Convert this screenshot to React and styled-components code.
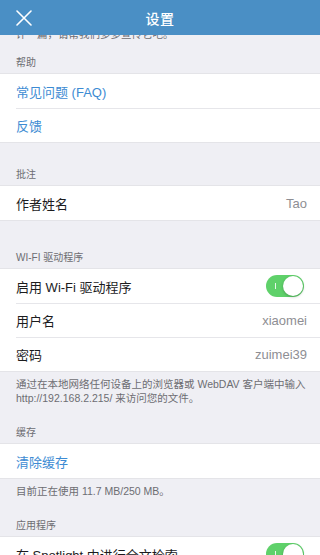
import React from "react";
import styled, { createGlobalStyle } from "styled-components";

const GlobalStyle = createGlobalStyle`
  html, body {
    margin: 0;
    padding: 0;
    background: #efeff4;
  }
  body {
    font-family: "Liberation Sans", "Noto Sans CJK SC", sans-serif;
    -webkit-font-smoothing: antialiased;
  }
`;

const Screen = styled.div`
  width: 320px;
  height: 555px;
  display: flex;
  flex-direction: column;
  overflow: hidden;
  background: #efeff4;
`;

const NavBar = styled.header`
  flex: 0 0 35px;
  display: flex;
  align-items: center;
  justify-content: center;
  position: relative;
  z-index: 2;
  background: #4a8fc5;
  color: #fff;
  font-size: 14px;
  font-weight: 500;
  letter-spacing: 0.5px;

  .close-btn {
    position: absolute;
    left: 16px;
    top: 10px;
    width: 16px;
    height: 16px;
    padding: 0;
    border: 0;
    background: none;
    display: flex;
  }
`;

const Content = styled.main`
  flex: 1;
  overflow: hidden;
`;

const SectionHeader = styled.div`
  padding: ${(p) => p.$top}px 16px 5px;
  font-size: 10px;
  line-height: 13px;
  color: #6d6d72;
`;

const SectionFooter = styled.div`
  padding: 5px 16px 0;
  margin-top: ${(p) => p.$offset || 0}px;
  font-size: 10.5px;
  line-height: 14px;
  color: #6d6d72;
  white-space: nowrap;
`;

const Group = styled.div`
  background: #fff;
  border-top: 1px solid #e4e4e8;
  border-bottom: 1px solid #e4e4e8;
  margin-top: -1px;
`;

const Row = styled.div`
  height: 34px;
  display: flex;
  align-items: center;
  justify-content: space-between;
  padding-right: 12px;
  margin-left: 16px;
  box-sizing: border-box;
  font-size: 13px;
  color: ${(p) => (p.$link ? "#3d8bd3" : "#1c1c1e")};

  & + & {
    border-top: 1px solid #e6e6ea;
  }
`;

const Value = styled.span`
  color: #8e8e93;
  padding-right: 1px;
`;

const SwitchTrack = styled.span`
  position: relative;
  width: 38px;
  height: 22px;
  margin-right: 4px;
  border-radius: 11px;
  background: #5fd16a;
  flex: 0 0 auto;

  .mark {
    position: absolute;
    left: 9px;
    top: 8px;
    width: 1px;
    height: 6px;
    background: rgba(255, 255, 255, 0.85);
  }
  .knob {
    position: absolute;
    right: 1px;
    top: 1px;
    width: 20px;
    height: 20px;
    border-radius: 50%;
    background: #fff;
    box-shadow: 0 1px 3px rgba(0, 0, 0, 0.25);
  }
`;

const Switch = () => (
  <SwitchTrack>
    <span className="mark" />
    <span className="knob" />
  </SwitchTrack>
);

const CloseIcon = () => (
  <svg width="16" height="16" viewBox="0 0 16 16">
    <path d="M1 1 L15 15 M15 1 L1 15" stroke="#fff" strokeWidth="1.6" strokeLinecap="round" />
  </svg>
);

const App = () => {
  return (
    <>
      <GlobalStyle />
      <Screen>
        <NavBar>
          <button type="button" className="close-btn">
            <CloseIcon />
          </button>
          设置
        </NavBar>
        <Content>
          <SectionFooter $offset={-13}>评一篇，请帮我们多多宣传它吧。</SectionFooter>

          <SectionHeader $top={15}>帮助</SectionHeader>
          <Group>
            <Row $link>常见问题 (FAQ)</Row>
            <Row $link>反馈</Row>
          </Group>

          <SectionHeader $top={25}>批注</SectionHeader>
          <Group>
            <Row>
              作者姓名
              <Value>Tao</Value>
            </Row>
          </Group>

          <SectionHeader $top={30}>WI-FI 驱动程序</SectionHeader>
          <Group>
            <Row>
              启用 Wi-Fi 驱动程序
              <Switch />
            </Row>
            <Row>
              用户名
              <Value>xiaomei</Value>
            </Row>
            <Row>
              密码
              <Value>zuimei39</Value>
            </Row>
          </Group>
          <SectionFooter>
            通过在本地网络任何设备上的浏览器或 WebDAV 客户端中输入
            <br />
            http://192.168.2.215/ 来访问您的文件。
          </SectionFooter>

          <SectionHeader $top={21}>缓存</SectionHeader>
          <Group>
            <Row $link>清除缓存</Row>
          </Group>
          <SectionFooter>目前正在使用 11.7 MB/250 MB。</SectionFooter>

          <SectionHeader $top={21}>应用程序</SectionHeader>
          <Group>
            <Row>
              在 Spotlight 中进行全文检索
              <Switch />
            </Row>
          </Group>
        </Content>
      </Screen>
    </>
  );
};

export default App;
